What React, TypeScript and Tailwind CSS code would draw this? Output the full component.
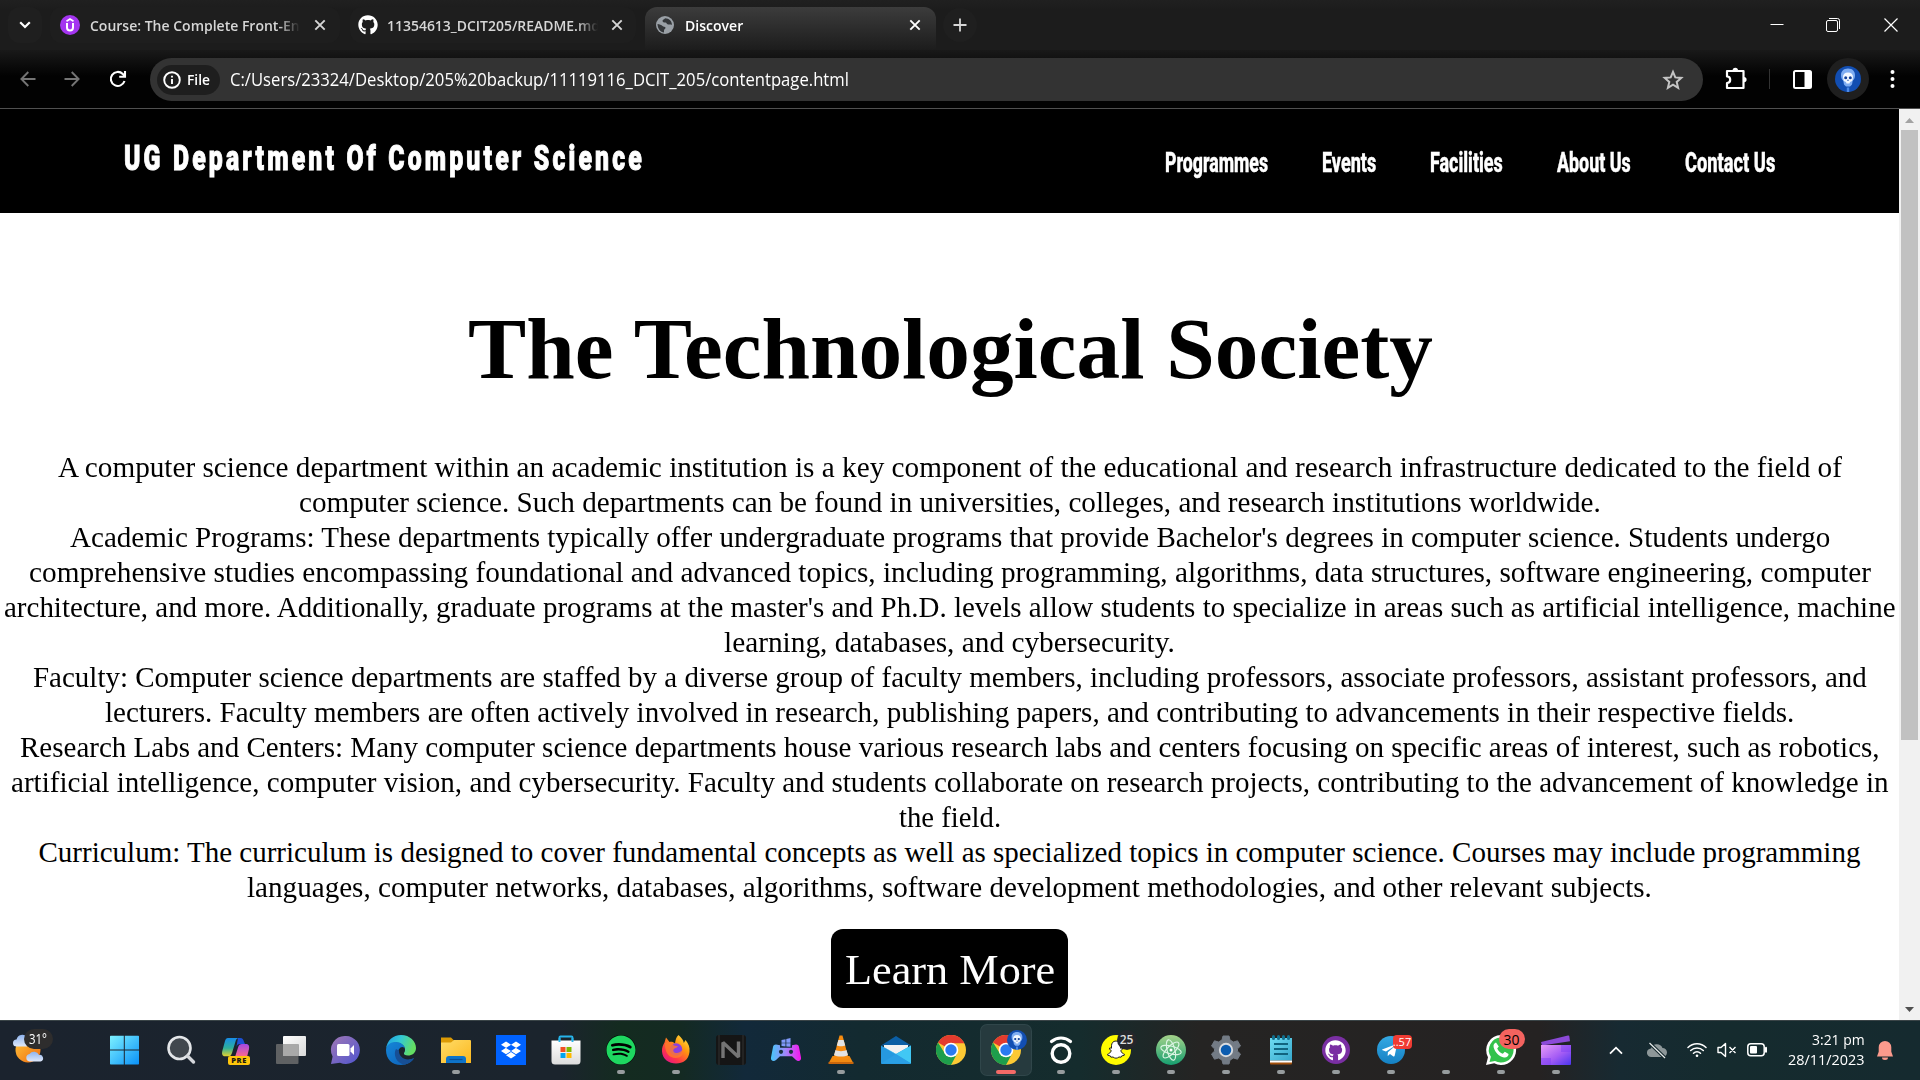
import React, { useLayoutEffect, useRef, useState } from 'react';
import { FaDropbox, FaGithub, FaSpotify, FaTelegramPlane } from 'react-icons/fa';

/* A single line of text, condensed or expanded to an exact width. */
function Fit({ w, children, className = '' }: { w: number; children: string; className?: string }) {
  const ref = useRef<HTMLSpanElement>(null);
  const [k, setK] = useState(1);
  useLayoutEffect(() => {
    if (ref.current) setK(w / ref.current.offsetWidth);
  }, [w]);
  return (
    <span className={`block shrink-0 text-left ${className}`} style={{ width: w }}>
      <span ref={ref} className="inline-block origin-left whitespace-nowrap align-top" style={{ transform: `scaleX(${k})` }}>
        {children}
      </span>
    </span>
  );
}

function Cross({ className = '' }: { className?: string }) {
  return (
    <svg width="12" height="12" viewBox="0 0 12 12" className={`shrink-0 ${className}`} fill="none" stroke="currentColor" strokeWidth="1.9">
      <path d="M1.3 1.3l9.4 9.4M10.7 1.3l-9.4 9.4" />
    </svg>
  );
}

function Skull({ size }: { size: number }) {
  return (
    <svg width={size} height={size} viewBox="0 0 26 26" className="shrink-0">
      <circle cx="13" cy="13" r="13" fill="#124eb2" />
      <path d="M13 2.500c-4.600 0-7 2.800-7 6.800 0 2.800 1 4.400 2.300 5.400L9 18.500l2 2h4l2-2 .7-3.800c1.300-1 2.300-2.600 2.300-5.400 0-4-2.400-6.800-7-6.800z" fill="#7fadf2" />
      <path d="M13 6.500c-3.300 0-5 1.600-5 4.800l.8 3.700 2.200 1 .5 1.500h3l.5-1.500 2.200-1 .8-3.700c0-3.200-1.700-4.800-5-4.800z" fill="#f3f8ff" />
      <ellipse cx="10.700" cy="11.800" rx="1.500" ry="1.500" fill="#12409a" />
      <ellipse cx="15.300" cy="11.800" rx="1.500" ry="1.500" fill="#12409a" />
      <path d="M13 13.200l-.9 1.600h1.800z" fill="#12409a" />
      <path d="M11.800 21.500h2.400V26h-2.400z" fill="#4e8be6" />
    </svg>
  );
}

function TabBar() {
  return (
    <div className="flex h-[50px] items-center bg-[linear-gradient(#202020,#1c1c1c_10px,#1c1c1c)] text-[#d6d6d6]">
      <div className="ml-2 flex h-9 w-[34px] shrink-0 items-center justify-center rounded-xl bg-[#1f1f1f]">
        <svg width="12" height="8" viewBox="0 0 12 8" fill="none" stroke="#fff" strokeWidth="2.200"><path d="M1.200 1.200L6 6l4.800-4.800" /></svg>
      </div>
      <div className="ml-2 flex h-[36px] w-[290px] shrink-0 items-center rounded-xl bg-[#1e1e1e] pl-[10px]">
        <svg width="20" height="20" viewBox="0 0 20 20" className="shrink-0">
          <circle cx="10" cy="10" r="10" fill="#a435f0" />
          <path d="M6.500 6.200L10 4l3.500 2.200" fill="none" stroke="#fff" strokeWidth="1.700" />
          <path d="M7 8v4.500c0 1.900 1.200 3 3 3s3-1.100 3-3V8" fill="none" stroke="#fff" strokeWidth="2" />
        </svg>
        <div className="ml-[10px] w-[212px] text-[15px] font-semibold [mask-image:linear-gradient(to_right,#000_188px,transparent_210px)]">
          <Fit w={210}>Course: The Complete Front-En</Fit>
        </div>
        <Cross className="ml-[12px]" />
      </div>
      <div className="ml-[10px] flex h-[36px] w-[286px] shrink-0 items-center rounded-xl bg-[#1e1e1e] pl-2">
        <FaGithub className="size-5 shrink-0 text-white" />
        <div className="ml-[9px] w-[213px] text-[15px] font-semibold [mask-image:linear-gradient(to_right,#000_190px,transparent_211px)]">
          <Fit w={213}>11354613_DCIT205/README.md</Fit>
        </div>
        <Cross className="ml-[11px]" />
      </div>
      <div className="mt-[7px] ml-[9px] flex h-[43px] w-[291px] shrink-0 items-center rounded-t-xl bg-[linear-gradient(#3c3c3c,#1c1c1c)] pb-[7px] pl-[11px] text-white">
        <svg width="18" height="18" viewBox="0 0 18 18" className="shrink-0">
          <circle cx="9" cy="9" r="9" fill="#9aa0a6" />
          <path d="M1.500 8c2 .2 4 1 5 2 .8.800 2.600.5 3 1.500.4 1.300-1.500 1.500-1.500 3v2C4.500 16.300 1.700 13 1.500 8zM9 2.200c-.5 1.500-2.300 1.200-2.500 2.500C6.300 6 8 6.500 9.500 6.500c1.300 0 1 1.700 2.500 2 1.200.3 2.500-.6 4 .5 0-3.700-2.600-6.800-7-6.800z" fill="#34373a" />
        </svg>
        <Fit w={58} className="ml-[11px] text-[15px] font-semibold">Discover</Fit>
        <Cross className="ml-[166px]" />
      </div>
      <div className="ml-[7px] flex size-[34px] shrink-0 items-center justify-center rounded-full bg-[#1f1f1f]">
        <svg width="14" height="14" viewBox="0 0 14 14" stroke="#d6d6d6" strokeWidth="1.800"><path d="M7 .5v13M.5 7h13" /></svg>
      </div>
      <div className="mr-[22px] ml-auto flex items-center">
        <svg width="14" height="14" viewBox="0 0 14 14" fill="none" stroke="#fff"><path d="M.5 6.500h13" /></svg>
        <svg width="14" height="14" viewBox="0 0 14 14" className="ml-[42px]" fill="none" stroke="#fff"><rect x=".5" y="2.500" width="11" height="11" rx="1.500" /><path d="M3 .5h8.500a2 2 0 0 1 2 2V11" /></svg>
        <svg width="14" height="14" viewBox="0 0 14 14" className="ml-[44px]" fill="none" stroke="#fff" strokeWidth="1.200"><path d="M.5.5l13 13M13.500.5l-13 13" /></svg>
      </div>
    </div>
  );
}

function Toolbar() {
  return (
    <div className="flex h-[58px] items-center bg-[linear-gradient(#191919,#020202_26px)] text-white">
      <svg width="16" height="16" viewBox="0 0 16 16" className="ml-5 shrink-0" fill="none" stroke="#747474" strokeWidth="1.900"><path d="M15.500 8H1.500M8.300 1L1.400 8l6.900 7" /></svg>
      <svg width="16" height="16" viewBox="0 0 16 16" className="ml-[28px] shrink-0" fill="none" stroke="#747474" strokeWidth="1.900"><path d="M.5 8h14M7.700 1l6.900 7-6.900 7" /></svg>
      <svg width="18" height="18" viewBox="0 0 18 18" className="ml-[29px] shrink-0" fill="none" stroke="#fff" strokeWidth="2.100"><path d="M15.500 11A7 7 0 1 1 13.800 4l1.700 1.800M16 1v5.800h-5.800" /></svg>
      <div className="mt-[1px] ml-[23px] flex h-[43px] w-[1553px] shrink-0 items-center rounded-full bg-[#333]">
        <div className="ml-[7px] flex h-[30px] w-[63px] items-center rounded-full bg-[#1e1e1e]">
          <svg width="18" height="18" viewBox="0 0 18 18" className="ml-[6px]" fill="none" stroke="#fff" strokeWidth="1.900"><circle cx="9" cy="9" r="7.800" /><path d="M9 8v5M9 4.800v1.800" /></svg>
          <Fit w={23} className="mb-[2px] ml-[6px] text-[15px] leading-5 font-semibold">File</Fit>
        </div>
        <Fit w={619} className="mb-[1px] ml-[10px] text-[18px] leading-6">C:/Users/23324/Desktop/205%20backup/11119116_DCIT_205/contentpage.html</Fit>
        <svg width="22" height="22" viewBox="0 0 22 22" className="mr-[19px] ml-auto" fill="none" stroke="#c4c4c4" strokeWidth="2"><path d="M11 2.800l2.300 5.600 6 .5-4.600 4 1.400 5.900L11 15.600l-5.100 3.200 1.400-5.900-4.600-4 6-.5z" /></svg>
      </div>
      <svg width="24" height="26" viewBox="0 0 24 26" className="mb-[3px] ml-[21px] shrink-0" fill="none" stroke="#fff" strokeWidth="2.200"><path d="M3 6h16.500v17H3v-5c2 0 3.200-1.400 3.200-3.200S5 11.500 3 11.500z" strokeLinejoin="round" /><path d="M8.600 5.500a2.700 2.700 0 0 1 5.400 0zM20 12a2.600 2.600 0 0 1 0 5.200z" fill="#fff" stroke="none" /></svg>
      <div className="ml-[21px] h-5 w-px bg-[#333]" />
      <svg width="19" height="19" viewBox="0 0 19 19" className="ml-[23px] shrink-0"><rect x="1" y="1" width="17" height="17" rx="1.500" fill="none" stroke="#fff" strokeWidth="2" /><path d="M11.500 1H18v17h-6.500z" fill="#fff" /></svg>
      <div className="ml-[15px] flex size-[42px] shrink-0 items-center justify-center rounded-full bg-[#1f1f1f]"><Skull size={26} /></div>
      <svg width="5" height="18" viewBox="0 0 5 18" className="ml-[21px] shrink-0" fill="#fff"><circle cx="2.500" cy="2" r="2" /><circle cx="2.500" cy="9" r="2" /><circle cx="2.500" cy="16" r="2" /></svg>
    </div>
  );
}

const links: [string, number][] = [['Programmes', 103], ['Events', 54], ['Facilities', 73], ['About Us', 74], ['Contact Us', 90]];

const lines: [string, number][] = [
  ['A computer science department within an academic institution is a key component of the educational and research infrastructure dedicated to the field of', 1784],
  ['computer science. Such departments can be found in universities, colleges, and research institutions worldwide.', 1302],
  ["Academic Programs: These departments typically offer undergraduate programs that provide Bachelor's degrees in computer science. Students undergo", 1760],
  ['comprehensive studies encompassing foundational and advanced topics, including programming, algorithms, data structures, software engineering, computer', 1842],
  ["architecture, and more. Additionally, graduate programs at the master's and Ph.D. levels allow students to specialize in areas such as artificial intelligence, machine", 1892],
  ['learning, databases, and cybersecurity.', 451],
  ['Faculty: Computer science departments are staffed by a diverse group of faculty members, including professors, associate professors, assistant professors, and', 1834],
  ['lecturers. Faculty members are often actively involved in research, publishing papers, and contributing to advancements in their respective fields.', 1689],
  ['Research Labs and Centers: Many computer science departments house various research labs and centers focusing on specific areas of interest, such as robotics,', 1860],
  ['artificial intelligence, computer vision, and cybersecurity. Faculty and students collaborate on research projects, contributing to the advancement of knowledge in', 1878],
  ['the field.', 102],
  ['Curriculum: The curriculum is designed to cover fundamental concepts as well as specialized topics in computer science. Courses may include programming', 1822],
  ['languages, computer networks, databases, algorithms, software development methodologies, and other relevant subjects.', 1405],
];

function Page() {
  return (
    <main className="h-[911px] w-[1899px] shrink-0 overflow-hidden bg-white text-black">
      <header className="flex h-[104px] items-start bg-black text-white">
        <Fit w={521} className="mt-[29px] ml-[124px] font-[Roboto] text-[35px] leading-[42px] font-black tracking-[4.5px] [-webkit-text-stroke:1px_#fff]">UG Department Of Computer Science</Fit>
        <nav className="mt-[38px] ml-[520px] flex gap-[54px] font-[Roboto] text-[27px] leading-8 font-extrabold [-webkit-text-stroke:0.4px_#fff]">
          {links.map(([t, w]) => <Fit key={t} w={w}>{t}</Fit>)}
        </nav>
      </header>
      <h1 className="flex justify-center pt-[86px] pl-[2px] font-['Liberation_Serif',serif] text-[87px] leading-[100px] font-bold">
        <Fit w={965}>The Technological Society</Fit>
      </h1>
      <div className="mt-[51px] flex flex-col items-center font-['Liberation_Serif',serif] text-[29px] leading-[35px]">
        {lines.map(([t, w]) => <Fit key={t} w={w}>{t}</Fit>)}
      </div>
      <div className="mt-[24px] flex justify-center">
        <button className="flex h-[79px] w-[237px] items-center justify-center rounded-[12px] bg-black pt-[2px] font-['Liberation_Serif',serif] text-[43px] leading-[52px] text-white">
          <Fit w={210}>Learn More</Fit>
        </button>
      </div>
    </main>
  );
}

function Scrollbar() {
  return (
    <div className="flex w-[21px] flex-col items-center bg-[#f1f1f1]">
      <div className="flex h-[21px] items-center pt-[2px]"><svg width="9" height="5" viewBox="0 0 9 5" fill="#a3a3a3"><path d="M4.500 0L9 5H0z" /></svg></div>
      <div className="h-[610px] w-[17px] bg-[#c1c1c1]" />
      <div className="mt-auto flex h-[21px] items-center"><svg width="9" height="5" viewBox="0 0 9 5" fill="#505050"><path d="M4.500 5L0 0h9z" /></svg></div>
    </div>
  );
}

function Chrome() {
  return (
    <svg width="30" height="30" viewBox="0 0 30 30">
      <circle cx="15" cy="15" r="15" fill="#fcc934" />
      <path d="M15 15L2 7.500A15 15 0 0 1 28 7.500L28 8.200H15z" fill="#e33b2e" />
      <path d="M2 7.500A15 15 0 0 0 15 30l6.200-11.400L15 15 8.900 18.500z" fill="#1e9e4c" />
      <circle cx="15" cy="15" r="7.300" fill="#fff" />
      <circle cx="15" cy="15" r="5.700" fill="#2a7af0" />
    </svg>
  );
}

function Ghost() {
  return (
    <svg width="20" height="20" viewBox="0 0 20 20"><path d="M10 1c3 0 4.500 2.200 4.500 4.700v2.500l1.700-.3.500 1.200-2 1.500c.8 2 2 3.100 3.800 3.700l-.3 1.100-2.500.5-.6 1.300-2.100-.2c-1.100.8-2 1.200-3 1.200s-1.900-.4-3-1.200l-2.100.2-.6-1.300-2.500-.5-.3-1.100c1.800-.6 3-1.700 3.800-3.700l-2-1.500.5-1.200 1.700.3V5.700C5.500 3.200 7 1 10 1z" fill="#fff" stroke="#222" strokeWidth="1" strokeLinejoin="round" /></svg>
  );
}

type TaskApp = { icon: React.ReactNode; run?: boolean; active?: boolean };
const S = ({ children }: { children: React.ReactNode }) => <svg width="30" height="30" viewBox="0 0 30 30" className="overflow-visible">{children}</svg>;

const apps: TaskApp[] = [
  { icon: <S>
      <defs><linearGradient id="win" x2="1" y2="1"><stop stopColor="#7df1ff" /><stop offset="1" stopColor="#0a91f8" /></linearGradient></defs>
      <path d="M-1 1.500a.7.700 0 0 1 .7-.7H12.800v13.800H-1zM13.800.8H27.300a.7.700 0 0 1 .7.700v13.100H13.800zM-1 15.600h13.800v13.800H-.3a.7.700 0 0 1-.7-.7zM13.800 15.600H28v13.100a.7.700 0 0 1-.7.700H13.800z" fill="url(#win)" />
    </S> },
  { icon: <S><circle cx="13.500" cy="13" r="11" fill="#41474e" stroke="#e4e6e9" strokeWidth="2.600" /><path d="M21.500 21l6 6" stroke="#d5d7db" strokeWidth="3.400" strokeLinecap="round" /></S> },
  { icon: <S>
      <defs>
        <linearGradient id="cpa" x2="0" y2="1"><stop stopColor="#178de8" /><stop offset=".55" stopColor="#2eb09b" /><stop offset="1" stopColor="#e5d22c" /></linearGradient>
        <linearGradient id="cpb" x2="0" y2="1"><stop stopColor="#a347e5" /><stop offset="1" stopColor="#ff6c86" /></linearGradient>
      </defs>
      <path d="M17 3h2.500c2 0 2.800 1.500 3.400 3.500L24 9h-5c-2 0-3 1-3.600 3z" fill="#1c50d4" />
      <path d="M7 3h11c-2 0-3 1.500-3.500 3.500L11 18c-.7 2-1.500 3.300-3.500 3.300H4C1 21.300.7 18.500 1.300 16L4 6c.6-2 1.500-3 3-3z" fill="url(#cpa)" />
      <path d="M21 9h4c3 0 3.500 2.500 3 5l-2 8h-12l3.200-10c.6-2 1.800-3 3.800-3z" fill="url(#cpb)" />
      <rect x="7" y="21" width="22" height="9" rx="2" fill="#ffc60b" />
      <text x="18" y="28.400" fontSize="7.500" fontWeight="800" textAnchor="middle" letterSpacing=".6" fill="#1d1a10">PRE</text>
    </S> },
  { icon: <S>
      <defs><linearGradient id="tv" x2="1" y2="1"><stop stopColor="#fff" /><stop offset="1" stopColor="#d9d9d9" /></linearGradient></defs>
      <rect x="7" y="1" width="23" height="20" rx="1" fill="url(#tv)" /><rect x="0" y="9" width="22.500" height="20" rx="1" fill="#5f6163" /><path d="M7 9h15.500v12H7z" fill="#a9a9a9" />
    </S> },
  { icon: <S>
      <defs><linearGradient id="ch" x2="1" y2="1"><stop stopColor="#a077b4" /><stop offset="1" stopColor="#4f55d0" /></linearGradient></defs>
      <path d="M15 1a14 14 0 1 1-6 26.700L0 29l1.600-7.500A14 14 0 0 1 15 1z" fill="url(#ch)" /><rect x="6" y="9" width="12.500" height="12" rx="1.500" fill="#fff" /><path d="M19.500 13.500L23 10v10l-3.500-3.500z" fill="#fff" />
    </S> },
  { icon: <S>
      <defs>
        <linearGradient id="ea" x2="1" y2=".3"><stop stopColor="#1d9de6" /><stop offset=".5" stopColor="#33c8d4" /><stop offset="1" stopColor="#64de63" /></linearGradient>
        <linearGradient id="eb" x2="1" y2="1"><stop stopColor="#1586d8" /><stop offset="1" stopColor="#0d5eb6" /></linearGradient>
      </defs>
      <path d="M0 14C1 5.500 7 0 15 0c9 0 15 6.500 15 13 0 5-4 7.500-8 7.500-3 0-4.500-1-4-2.500 1-1.500 1-2 1-4 0-3-4-6.500-9-6.500-5 0-9 3-10 6.500z" fill="url(#ea)" />
      <path d="M0 15c0-5 4.500-8 9.500-8C15 7 19 10.500 19 14c0-1.500-2.500-3-4.500-1.500C9 17 13 26 22 25c3-.4 5-1.500 6-2-2 4-7 7-13 7C6 30 0 24 0 15z" fill="url(#eb)" />
      <path d="M10 14c-3 5 0 14.500 8.500 15.500 4-.6 7.500-3 9.500-6.500-8 4-15.500-1-15-7.500z" fill="#174f95" />
    </S> },
  { run: true, icon: <S>
      <defs><linearGradient id="fo" x2="1" y2="1"><stop stopColor="#ffdc68" /><stop offset="1" stopColor="#fcb81e" /></linearGradient></defs>
      <path d="M0 2.500h10l3.500 3.500V12H0z" fill="#dc9a05" /><path d="M0 7.500h10l3-2.500h16a1 1 0 0 1 1 1v22H0z" fill="url(#fo)" /><path d="M5 28v-4a3 3 0 0 1 3-3h14a3 3 0 0 1 3 3v4z" fill="#0e74ca" /><path d="M8.500 24.500h13" stroke="#0b4f97" strokeWidth="1.200" />
    </S> },
  { icon: <div className="flex size-[30px] items-center justify-center bg-[#0062ff]"><FaDropbox className="size-[20px] text-white" /></div> },
  { icon: <S>
      <defs><linearGradient id="st" x2="0" y2="1"><stop stopColor="#fff" /><stop offset="1" stopColor="#dcdcdc" /></linearGradient></defs>
      <path d="M8.500 7V2.500a1 1 0 0 1 1-1h11a1 1 0 0 1 1 1V7" fill="none" stroke="#26b4ea" strokeWidth="1.900" /><path d="M.5 5.500h29V26a3.500 3.500 0 0 1-3.500 3.500H4A3.500 3.500 0 0 1 .5 26z" fill="url(#st)" /><path d="M8.500 3v4M21.500 3v4" stroke="#26b4ea" strokeWidth="1.900" />
      <path d="M9.500 12h5v5h-5z" fill="#f25022" /><path d="M15.500 12h5v5h-5z" fill="#7fba00" /><path d="M9.500 18h5v5h-5z" fill="#00a4ef" /><path d="M15.500 18h5v5h-5z" fill="#ffb900" />
    </S> },
  { run: true, icon: <div className="rounded-full bg-black"><FaSpotify className="size-[30px] text-[#1ed760]" /></div> },
  { run: true, icon: <S>
      <defs>
        <linearGradient id="ff" x1="1" x2=".2" y2="1"><stop stopColor="#fff44f" /><stop offset=".4" stopColor="#ff980e" /><stop offset=".75" stopColor="#ff3647" /><stop offset="1" stopColor="#e31587" /></linearGradient>
      </defs>
      <path d="M17.500 0c3.500 3 5 5.500 5.300 8l1.700-3c3 3.500 4.500 7 4 12C27.500 25 22 28.500 15 28.500S1.500 24.500 1 16.500c-.2-4 1-6.500 2.500-9L5 2.500l3.500 4.500c2-.5 4 0 5.500 1.500C14.500 5 15 2 17.500 0z" fill="url(#ff)" />
      <circle cx="15" cy="14.500" r="6.200" fill="#8a3fe0" /><path d="M4 8c3-2 7-1 9 2.500l4 .8c-1 2-3.500 1.500-4.500 3.200-.8 1.400.5 4 3.500 3.500 3-.5 5-2 5.500-4 2 6-2 9-7 9-6 0-11-5-10.500-15z" fill="#ff7b2a" opacity=".8" />
    </S> },
  { icon: <S><rect x="0" y="0" width="30" height="30" rx="3" fill="#151515" /><path d="M3 0v30M27 0v30" stroke="#323232" /><path d="M7 23V7.500L22.500 22V6.500" fill="none" stroke="#747474" strokeWidth="3.400" strokeLinejoin="bevel" /></S> },
  { icon: <S>
      <defs><linearGradient id="gp"><stop stopColor="#45c8fa" /><stop offset=".5" stopColor="#a384fa" /><stop offset="1" stopColor="#f813ee" /></linearGradient></defs>
      <path d="M5 9.500l4 .8v2.400h12v-2.400l4-.8c2 0 2.700 1 3 2.500L30 22.500c.7 3.500-3 4.500-5 2.500l-4-3.800H9L5 25C3 27-.7 26 0 22.500L2 12c.3-1.500 1-2.500 3-2.500z" fill="url(#gp)" />
      <circle cx="10" cy="16.800" r="2.100" fill="#193040" /><circle cx="20" cy="16.800" r="2.100" fill="#193040" />
      <path d="M10.500 5l4-.8v3.500h-4zM15.300 4l4.200-1v4.700h-4.200zM10.500 8.300h4v3.200l-4-.5zM15.300 8.300h4.200v3.500l-4.200-.3z" fill="#8099f8" />
    </S> },
  { run: true, icon: <S>
      <path d="M6.500 21h17l3.500 6.500H3z" fill="#f18a11" /><path d="M2.500 27h25v2h-25z" fill="#c9660b" />
      <path d="M13.500.5h3L22.500 23c-3 2.300-12 2.300-15 0z" fill="#f78c10" /><path d="M12.400 5h5.200l1.600 5.500c-2 1-6.400 1-8.400 0zM9.500 15c2.500 1.500 8.500 1.500 11 0l1.500 5c-3 2-11 2-14 0z" fill="#e3e3e3" />
    </S> },
  { icon: <S>
      <path d="M0 10.500L15 1l15 9.500z" fill="#0b5fa5" /><path d="M3 10h24v14H3z" fill="#f2f2f2" /><path d="M0 10.500L15 19l15-8.500V28a1 1 0 0 1-1 1H1a1 1 0 0 1-1-1z" fill="#2699e0" /><path d="M0 10.500L30 28.500 30 10.500 15 19z" fill="#41c8f4" /><path d="M0 28.500l15-9.500 15 9.500z" fill="#2a9fe5" />
    </S> },
  { icon: <Chrome /> },
  { active: true, icon: <><Chrome /><span className="absolute -top-[5px] left-[16px]"><Skull size={20} /></span></> },
  { run: true, icon: <S><circle cx="15" cy="18.500" r="8.800" fill="none" stroke="#fff" strokeWidth="3.400" /><path d="M5.500 6.500C11 1.800 19 1.800 24.500 6.500" fill="none" stroke="#fff" strokeWidth="3.200" strokeLinecap="round" /></S> },
  { run: true, icon: <><div className="flex size-[30px] items-center justify-center rounded-full bg-[#fffc00]"><Ghost /></div><span className="absolute -top-[5px] left-[16px] flex size-5 items-center justify-center rounded-full bg-[#24262b] text-[12px] font-semibold text-[#ddd]">25</span></> },
  { run: true, icon: <S>
      <defs><linearGradient id="at" x2="0" y2="1"><stop stopColor="#a4d28a" /><stop offset="1" stopColor="#169f70" /></linearGradient></defs>
      <circle cx="15" cy="15" r="15" fill="url(#at)" /><g fill="none" stroke="#dcf5e4" strokeWidth="1.100"><ellipse cx="15" cy="15" rx="10.500" ry="3.900" transform="rotate(15 15 15)" /><ellipse cx="15" cy="15" rx="10.500" ry="3.900" transform="rotate(75 15 15)" /><ellipse cx="15" cy="15" rx="10.500" ry="3.900" transform="rotate(135 15 15)" /></g><circle cx="15" cy="15" r="1.500" fill="#fff" />
    </S> },
  { run: true, icon: <S>
      <path d="M12 1h6l1 4 3.500 2 4-1.200 3 5.200-3 2.800v2.400l3 2.800-3 5.200-4-1.200-3.500 2-1 4h-6l-1-4-3.500-2-4 1.200-3-5.200 3-2.800v-2.400l-3-2.800 3-5.200 4 1.200L11 5z" fill="#737b85" stroke="#737b85" strokeWidth="1" strokeLinejoin="round" /><circle cx="15" cy="15" r="6.200" fill="#0b5cb0" stroke="#d8dbdf" strokeWidth="1.900" />
    </S> },
  { run: true, icon: <S>
      <defs><linearGradient id="np" x2="1" y2="1"><stop stopColor="#6fdcf2" /><stop offset="1" stopColor="#37a8cc" /></linearGradient></defs>
      <path d="M4 27h22v1.500a1 1 0 0 1-1 1H5a1 1 0 0 1-1-1z" fill="#a4510d" /><path d="M4 3h22v22.500H4z" fill="url(#np)" /><path d="M4 25.500h22v2H4z" fill="#fff" /><path d="M8 9h14M8 14h14M8 19h14" stroke="#11647f" strokeWidth="2" /><path d="M7.500 1.500v2M12.500 1.500v2M17.500 1.500v2M22.500 1.500v2" stroke="#11708f" strokeWidth="3" strokeLinecap="round" />
    </S> },
  { run: true, icon: <div className="flex size-[28px] items-center justify-center rounded-full bg-[#7a2fa3]"><FaGithub className="size-[21px] text-white" /></div> },
  { run: true, icon: <><div className="flex size-[28px] items-center justify-center rounded-full bg-[linear-gradient(#35a9e3,#1581c4)]"><FaTelegramPlane className="mr-[3px] size-[17px] text-white" /></div><span className="absolute top-0 left-[17px] flex h-[14px] w-[19px] items-center justify-center rounded-[4px] bg-[#f03b33] text-[11px] text-white">..57</span></> },
  { run: true, icon: null },
  { run: true, icon: <><S><path d="M15 0a15 15 0 1 1-6.800 28.300L0 30l2-7.800A15 15 0 0 1 15 0z" fill="#fff" /><path d="M15 2.500a12.500 12.500 0 1 1-6 23.400L3.500 27l1.400-5.200A12.500 12.500 0 0 1 15 2.500z" fill="#33c24c" /><path d="M10 7.500c-1.800.5-3 2.500-2.300 5C9 17.500 13 21.500 18 22.500c2.500.4 4.500-1 4.600-3.500l-3.800-2.200-2 2c-2.500-1-4.500-2.800-5.600-5.400l1.600-1.900z" fill="#fff" /></S><span className="absolute -top-[6px] left-[13px] flex h-5 w-[26px] items-center justify-center rounded-full bg-[#f4635f] text-[14px] text-black">30</span></> },
  { run: true, icon: <S>
      <defs><linearGradient id="cl" x2="1" y2="1"><stop stopColor="#e69bf8" /><stop offset=".55" stopColor="#a45cf5" /><stop offset="1" stopColor="#4a35ef" /></linearGradient></defs>
      <path d="M0 7L27 .5a1 1 0 0 1 1.300.8l.7 5L1 10.500z" fill="#8b4ad8" /><path d="M0 10h30v19a1 1 0 0 1-1 1H1a1 1 0 0 1-1-1z" fill="url(#cl)" /><path d="M20 10h10v7H20zM0 23h10v7H0z" fill="#7a3ef4" opacity=".45" />
    </S> },
];

function Taskbar() {
  return (
    <footer className="flex h-[60px] items-stretch border-t border-[#3a4447] bg-[linear-gradient(to_right,#1b232e_0px,#1b242d_560px,#142b20_620px,#142a22_680px,#12293a_745px,#132a30_860px,#152c2d_1080px,#252423_1200px,#252222_1540px,#172a32_1620px,#152b2e_1720px,#152a2f_1920px)] text-white">
      <div className="relative w-[98px] shrink-0">
        <svg width="44" height="40" viewBox="0 0 44 40" className="mt-[9px] ml-[10px]">
          <defs><linearGradient id="sun" x2="1" y2="1"><stop stopColor="#ffc63c" /><stop offset="1" stopColor="#ef6b10" /></linearGradient><linearGradient id="cloud" x2="0" y2="1"><stop stopColor="#8fb4ee" /><stop offset="1" stopColor="#dfe8fa" /></linearGradient></defs>
          <circle cx="18" cy="20" r="12.500" fill="url(#sun)" />
          <path d="M6.500 16.500a3.500 3.500 0 0 1 0-7A6 6 0 0 1 17 7v9.500z" fill="url(#cloud)" />
          <path d="M19.500 31.500a3.800 3.800 0 0 1 0-7.500 5.500 5.500 0 0 1 9.500 1 3.300 3.300 0 0 1 1.500 6.500z" fill="url(#cloud)" />
        </svg>
        <span className="absolute top-[8px] left-[24px] flex h-5 w-[29px] items-center justify-center rounded-full bg-[#2e2d2d] pr-[2px] pb-px"><Fit w={18} className="text-[14px] leading-5">31°</Fit></span>
      </div>
      {apps.map((a, i) => (
        <div key={i} className="flex w-[55px] shrink-0 justify-center pt-1">
          <div className={`flex h-[50px] w-[50px] flex-col items-center rounded-md pt-[10px] ${a.active ? 'bg-[#263a3e] ring-1 ring-[#30464a]' : ''}`}>
            <div className="relative flex size-[30px] items-center justify-center">{a.icon}</div>
            {a.run && <div className="mt-[5px] h-1 w-2 shrink-0 rounded-full bg-[#979c9e]" />}
            {a.active && <div className="mt-[5px] h-1 w-5 shrink-0 rounded-full bg-[#f46a67]" />}
          </div>
        </div>
      ))}
      <div className="ml-auto flex items-center pr-[27px]">
        <svg width="14" height="9" viewBox="0 0 14 9" fill="none" stroke="#fff" strokeWidth="1.800"><path d="M1 7.700l6-6 6 6" /></svg>
        <svg width="20" height="18" viewBox="0 0 20 18" className="ml-[24px]"><path d="M4.500 15a4.300 4.300 0 0 1-.5-8.600A6.200 6.200 0 0 1 15.500 6 4.500 4.500 0 0 1 15.500 15z" fill="#8d9799" /><path d="M2.500 1l15.500 15" stroke="#172a2f" strokeWidth="3.500" /><path d="M2.500 1l15.500 15" stroke="#e9eded" strokeWidth="1.200" /></svg>
        <svg width="20" height="16" viewBox="0 0 20 16" className="mb-[2px] ml-[20px]" fill="none" stroke="#fff" strokeWidth="1.500" strokeLinecap="round"><path d="M1 5.500a12.700 12.700 0 0 1 18 0M3.700 8.500a9 9 0 0 1 12.600 0M6.500 11.300a5 5 0 0 1 7 0" /><circle cx="10" cy="13.800" r="1.300" fill="#fff" stroke="none" /></svg>
        <svg width="20" height="16" viewBox="0 0 20 16" className="mb-px ml-[10px]" fill="none" stroke="#fff" strokeWidth="1.400"><path d="M1 5.500h3L8.500 1.500v13L4 10.500H1zM12.500 5l6 6M18.500 5l-6 6" strokeLinejoin="round" /></svg>
        <svg width="21" height="14" viewBox="0 0 21 14" className="mb-px ml-[10px]" fill="none" stroke="#fff" strokeWidth="1.500"><rect x=".8" y=".8" width="16.400" height="12" rx="3" /><rect x="3" y="3" width="7" height="7.600" rx="1" fill="#fff" stroke="none" /><path d="M19 4.800v4" strokeWidth="2" strokeLinecap="round" /></svg>
        <div className="mb-[4px] ml-[20px] flex flex-col items-end text-[15px] leading-5">
          <Fit w={53}>3:21 pm</Fit>
          <Fit w={77}>28/11/2023</Fit>
        </div>
        <svg width="16" height="19" viewBox="0 0 16 19" className="ml-[12px]" fill="#fb9a8c"><path d="M8 0a6.300 6.300 0 0 1 6.300 6.300v4.500L16 15.500H0l1.700-4.700V6.300A6.300 6.300 0 0 1 8 0zM5 16.500h6a3 2.500 0 0 1-6 0z" /></svg>
      </div>
    </footer>
  );
}

export default function App() {
  return (
    <div className="flex h-[1080px] w-[1920px] flex-col overflow-hidden bg-black font-['Open_Sans','Noto_Sans',sans-serif]">
      <TabBar />
      <Toolbar />
      <div className="h-px shrink-0 bg-[#505050]" />
      <div className="flex h-[911px] shrink-0">
        <Page />
        <Scrollbar />
      </div>
      <Taskbar />
    </div>
  );
}
